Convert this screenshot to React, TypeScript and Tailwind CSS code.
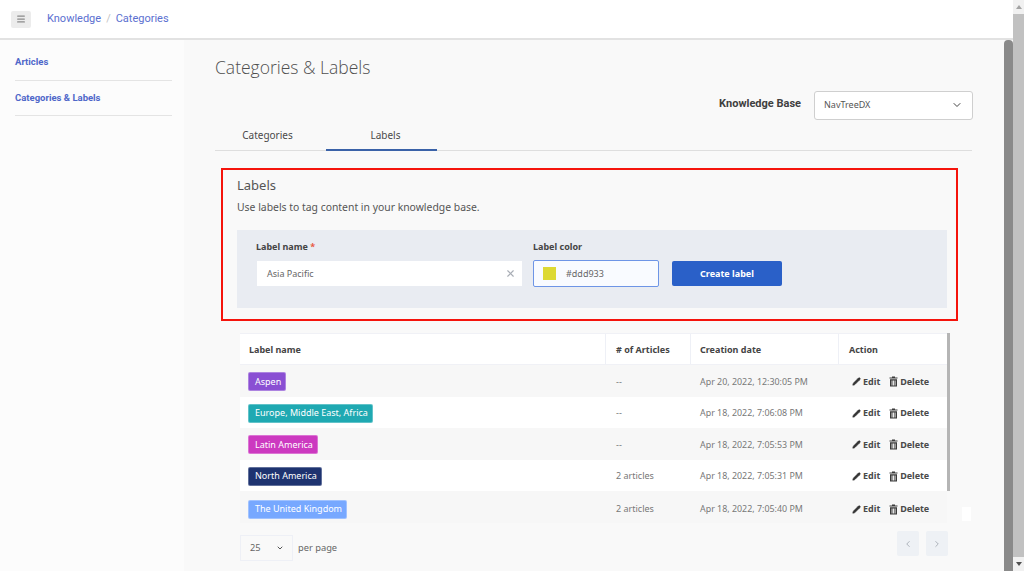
import { useState } from 'react';
import { ChevronDown, ChevronLeft, ChevronRight, Menu, X, Pencil } from 'lucide-react';

const rows = [
  { name: 'Aspen', color: 'bg-[#8a4fd3]', h: 'h-[32px]', articles: '--', date: 'Apr 20, 2022, 12:30:05 PM' },
  { name: 'Europe, Middle East, Africa', color: 'bg-[#1fa9b2]', h: 'h-[31px]', articles: '--', date: 'Apr 18, 2022, 7:06:08 PM' },
  { name: 'Latin America', color: 'bg-[#cc39c0]', h: 'h-[32px]', articles: '--', date: 'Apr 18, 2022, 7:05:53 PM' },
  { name: 'North America', color: 'bg-[#1e3370]', h: 'h-[31px]', articles: '2 articles', date: 'Apr 18, 2022, 7:05:31 PM' },
];
const lastRow = { name: 'The United Kingdom', color: 'bg-[#77a8ff]', articles: '2 articles', date: 'Apr 18, 2022, 7:05:40 PM' };

function TrashIcon() {
  return (
    <svg width="9" height="11" viewBox="0 0 9 11" className="mr-[2px]">
      <path d="M3 0.5h3v1h2.5v1h-8v-1H3z" fill="#3a3a3a" />
      <path
        fillRule="evenodd"
        d="M1 3.2h7V10.5H1zM2.6 4.4v5h.9v-5zM4.1 4.4v5h.9v-5zM5.6 4.4v5h.9v-5z"
        fill="#3a3a3a"
      />
    </svg>
  );
}

function Row({ r }: { r: { name: string; color: string; articles: string; date: string } }) {
  return (
    <>
      <div className="w-[366px] pl-[8px]">
        <span className={`inline-flex h-[19px] items-center rounded-[2px] border border-white/30 pl-[6px] pr-[4px] text-[9px] text-white ${r.color}`}>
          {r.name}
        </span>
      </div>
      <div className="w-[85px] pl-[10px] text-[#777]">{r.articles}</div>
      <div className="w-[148px] pl-[9px] text-[8.9px] text-[#777]">{r.date}</div>
      <div className="flex h-[12px] items-center pl-[13px] text-[9px] leading-[12px] font-bold text-[#4a4a4a]">
        <Pencil size={9} fill="#333" strokeWidth={1.5} className="mr-[2px] text-[#333]" />
        <span>Edit</span>
        <span className="w-[9px]" />
        <TrashIcon />
        <span className="tracking-[-0.1px]">Delete</span>
      </div>
    </>
  );
}

export default function App() {
  const [tab] = useState('Labels');

  return (
    <div className="flex h-[571px] w-[1024px] overflow-hidden bg-white font-['Noto_Sans',sans-serif] text-[#4a4a4a]">
      <div className="flex w-[1013px] flex-col">
        {/* Top bar */}
        <header className="flex h-[40px] shrink-0 items-center border-b-2 border-[#e2e2e2] pl-[11px] font-['Roboto',sans-serif] text-[11px] text-[#5b70d0]">
          <button className="flex h-[17px] w-[20px] items-center justify-center rounded-[2px] bg-[#ececec] text-[#8a8a8a]">
            <Menu size={10} strokeWidth={3} />
          </button>
          <span className="ml-[16px]">Knowledge</span>
          <span className="mx-[5px] text-[#c4c4c4]">/</span>
          <span>Categories</span>
        </header>

        <div className="flex min-h-0 flex-1">
          {/* Sidebar */}
          <aside className="w-[184px] shrink-0 bg-[#fcfcfc] pl-[15px] pr-[12px] font-['Roboto',sans-serif] text-[9.5px] font-bold text-[#4f67c9]">
            <div className="flex h-[41px] items-center border-b border-[#e4e4e4] pt-[4px]">Articles</div>
            <div className="flex h-[35px] items-center border-b border-[#e4e4e4]">Categories &amp; Labels</div>
          </aside>

          {/* Main */}
          <main className="relative flex min-w-0 flex-1 bg-[#f9f9f9]">
            <div className="w-[819px] shrink-0 pl-[31px]">
              <h1 className="mt-[14px] font-['Open_Sans',sans-serif] text-[17.5px] font-light leading-[27px] text-[#4f4f4f]">
                Categories &amp; Labels
              </h1>

              <div className="mt-[10px] flex h-[28px] items-center justify-end pr-[30px]">
                <span className="mr-[13px] -translate-y-[1px] font-['Roboto',sans-serif] text-[11px] font-bold text-[#3f3f3f]">Knowledge Base</span>
                <div className="flex h-[29px] w-[159px] items-center justify-between rounded-[3px] border border-[#cfcfcf] bg-white pl-[9px] pr-[9px] text-[9px] text-[#555]">
                  <span>NavTreeDX</span>
                  <ChevronDown size={12} strokeWidth={2} className="text-[#444]" />
                </div>
              </div>

              {/* Tabs */}
              <div className="mr-[31px] mt-[1px] flex h-[31px] border-b border-[#dedede] pl-[1px] text-[10px] text-[#4a4a4a]">
                {['Categories', 'Labels'].map((t) => (
                  <div
                    key={t}
                    className={
                      t === tab
                        ? 'ml-[7px] flex h-[31px] w-[111px] items-center justify-center border-b-2 border-[#3a62a8] pl-[8px] pt-[1px]'
                        : 'flex h-[31px] w-[103px] items-center justify-center pb-[1px]'
                    }
                  >
                    {t}
                  </div>
                ))}
              </div>

              {/* Create label box */}
              <section className="ml-[6px] mr-[45px] mt-[17px] h-[153px] border-2 border-[#f5140c] pl-[14px] pr-[9px]">
                <h2 className="mt-[5px] text-[13px] leading-[20px] text-[#555]">Labels</h2>
                <p className="mt-[4px] text-[10.4px] leading-[16px] text-[#555]">Use labels to tag content in your knowledge base.</p>
                <div className="mt-[15px] h-[78px] bg-[#e9ecf2] pl-[19px] pt-[11px]">
                  <div className="flex">
                    <div className="w-[277px]">
                      <div className="text-[9px] font-bold leading-[12px] text-[#444]">
                        Label name <span className="text-[#e8593f]">*</span>
                      </div>
                      <div className="ml-[1px] mt-[8px] flex h-[25px] w-[265px] items-center justify-between bg-white pl-[10px] pr-[6px] text-[9px] text-[#666]">
                        <span>Asia Pacific</span>
                        <X size={11} strokeWidth={2.5} className="text-[#a8adb5]" />
                      </div>
                    </div>
                    <div className="w-[126px]">
                      <div className="text-[9px] font-bold leading-[12px] text-[#444]">Label color</div>
                      <div className="mt-[7px] flex h-[27px] items-center rounded-[2px] border border-[#6e95e6] bg-[#f9fbff] pl-[9px] text-[9px] text-[#666]">
                        <span className="h-[13px] w-[13px] bg-[#ddd933]" />
                        <span className="ml-[10px]">#ddd933</span>
                      </div>
                    </div>
                    <button className="ml-[13px] mt-[20px] h-[25px] w-[110px] rounded-[2px] bg-[#2a60c8] text-[9px] font-bold text-white">
                      Create label
                    </button>
                  </div>
                </div>
              </section>

              {/* Table */}
              <div className="ml-[25px] mr-[53px] mt-[12px]">
                <div className="border-r-[3px] border-[#b5b5b5]">
                  <div className="flex h-[32px] items-center border-y border-[#f0f1f6] bg-white text-[9px] font-bold text-[#444]">
                    <div className="flex h-full w-[366px] items-center border-r border-[#eef0f6] pl-[9px] pt-[1px]">Label name</div>
                    <div className="flex h-full w-[85px] items-center border-r border-[#eef0f6] pl-[10px] pt-[1px]">
                      # of Articles
                    </div>
                    <div className="flex h-full w-[148px] items-center border-r border-[#eef0f6] pl-[9px] pt-[1px]">
                      Creation date
                    </div>
                    <div className="pl-[10px] pt-[1px]">Action</div>
                  </div>
                  {rows.map((r, i) => (
                    <div key={r.name} className={`flex items-center pt-[1px] text-[9px] ${r.h} ${i % 2 === 0 ? 'bg-[#f7f7f7]' : 'bg-white'}`}>
                      <Row r={r} />
                    </div>
                  ))}
                </div>
                <div className="mt-[1px] h-[2px] pr-[3px]" />
                {/* last row sits below the gap in the table's scrollbar */}
                <div className="-mt-[3px] h-[32px] border-r-[3px] border-transparent">
                  <div className="flex h-full items-center bg-[#f7f7f7] pt-[4px] text-[9px]">
                    <Row r={lastRow} />
                  </div>
                </div>

                {/* Pagination */}
                <div className="mt-[8px] flex items-start justify-between pr-[2px]">
                  <div className="mt-[4px] flex items-center text-[9.3px] text-[#666]">
                    <div className="flex h-[26px] w-[53px] items-center justify-between border border-[#eef0f6] pl-[9px] pr-[8px]">
                      <span>25</span>
                      <ChevronDown size={8} strokeWidth={3} className="text-[#555]" />
                    </div>
                    <span className="ml-[5px]">per page</span>
                  </div>
                  <div className="flex gap-[7px]">
                    <button className="flex h-[25px] w-[22px] items-center justify-center rounded-[2px] bg-[#eef1f5] text-[#a0a6ae]">
                      <ChevronLeft size={10} />
                    </button>
                    <button className="flex h-[25px] w-[22px] items-center justify-center rounded-[2px] bg-[#eef1f5] text-[#a0a6ae]">
                      <ChevronRight size={10} />
                    </button>
                  </div>
                </div>
              </div>
            </div>

            {/* Stray white patch over the page */}
            <div className="absolute left-[778px] top-[467px] h-[14px] w-[9px] bg-white" />

            {/* Inner scrollbar */}
            <div className="ml-auto h-full w-[9px] rounded-t-[4px] bg-[#8a8a8a]" />
          </main>
        </div>
      </div>

      {/* Browser scrollbar */}
      <div className="flex w-[11px] flex-col justify-between bg-[#c1c1c1]">
        <div className="flex h-[14px] items-center justify-center bg-[#f1f1f1]">
          <span className="h-0 w-0 border-x-[3px] border-b-[4px] border-x-transparent border-b-[#a3a3a3]" />
        </div>
        <div className="flex h-[14px] items-center justify-center bg-[#f1f1f1]">
          <span className="h-0 w-0 border-x-[3px] border-t-[4px] border-x-transparent border-t-[#505050]" />
        </div>
      </div>
    </div>
  );
}
